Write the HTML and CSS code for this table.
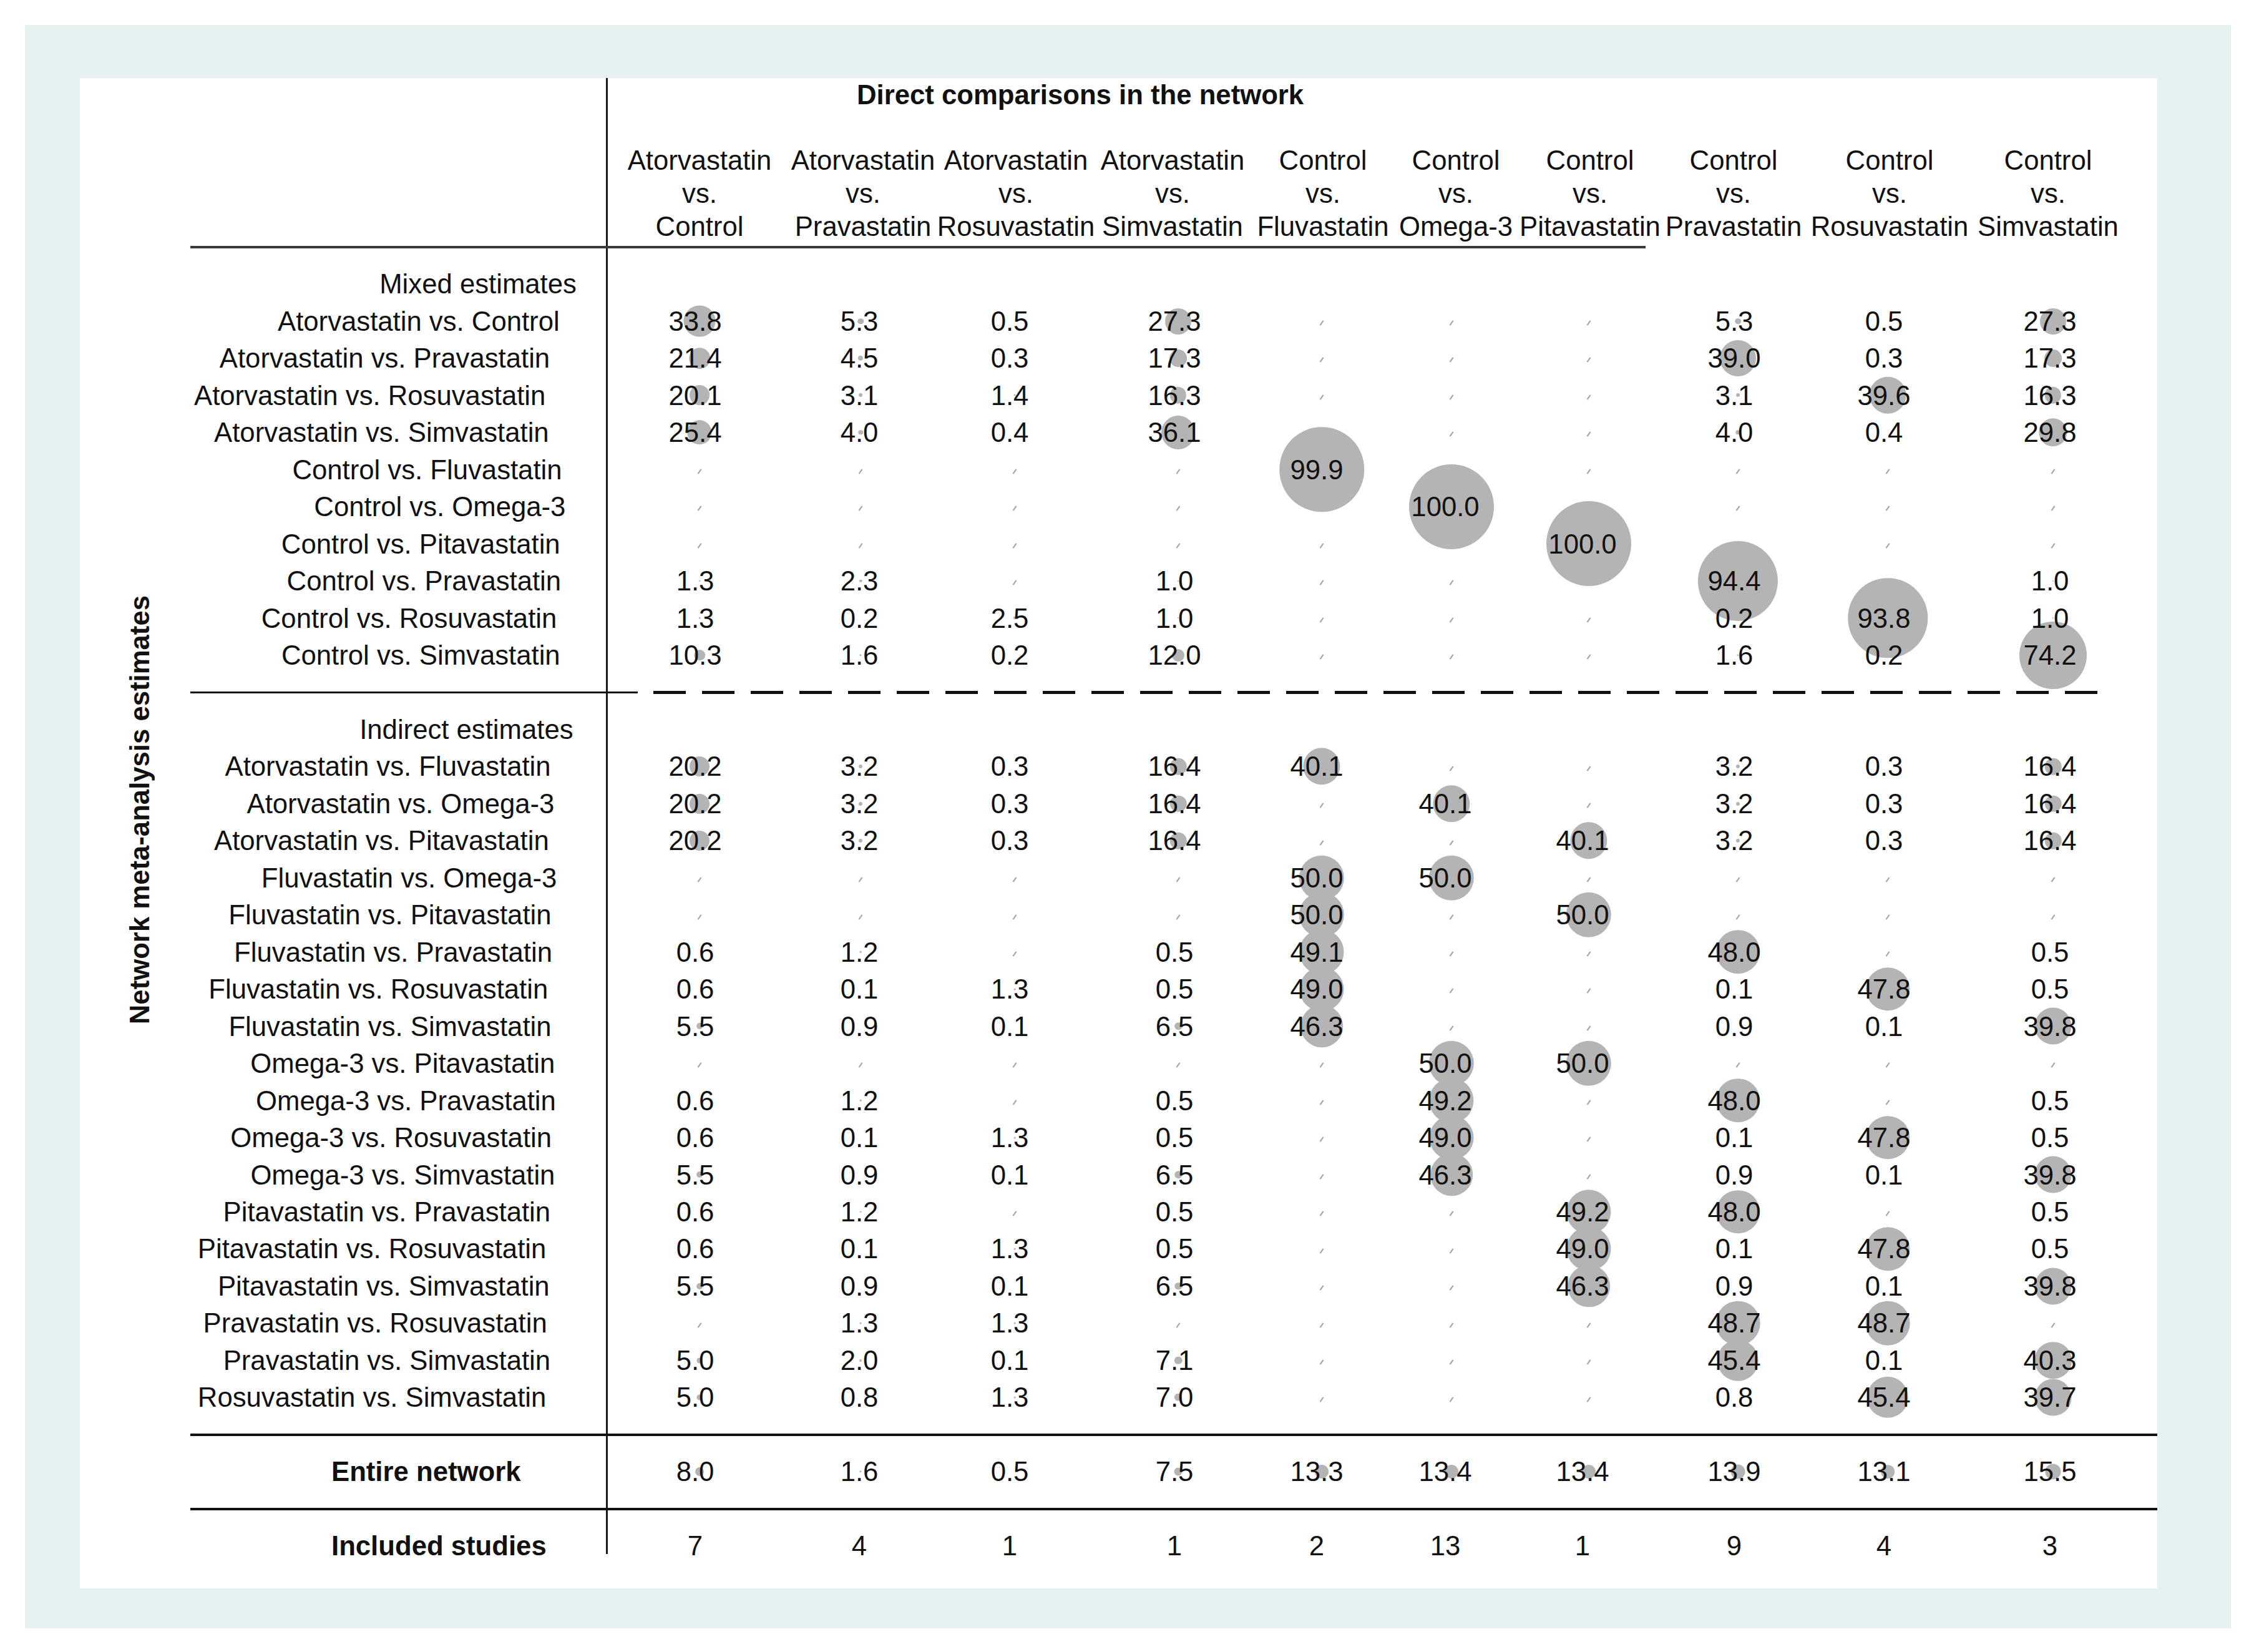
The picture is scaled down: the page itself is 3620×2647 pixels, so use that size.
FILE: index.html
```html
<!DOCTYPE html>
<html lang="en">
<head>
<meta charset="utf-8">
<title>Direct comparisons in the network</title>
<link rel="stylesheet" href="styles.css">
</head>
<body>
<div class="frame">
  <div class="panel">
    <div class="yaxis"><span class="ytitle">Network meta-analysis estimates</span></div>
    <div class="table">
      <div class="row row-title"><div class="lab"></div><div class="title">Direct comparisons in the network</div></div>
      <div class="row row-head">
        <div class="lab"></div>
        <div class="h"><span>Atorvastatin</span><span>vs.</span><span>Control</span></div>
        <div class="h"><span>Atorvastatin</span><span>vs.</span><span>Pravastatin</span></div>
        <div class="h"><span>Atorvastatin</span><span>vs.</span><span>Rosuvastatin</span></div>
        <div class="h"><span>Atorvastatin</span><span>vs.</span><span>Simvastatin</span></div>
        <div class="h"><span>Control</span><span>vs.</span><span>Fluvastatin</span></div>
        <div class="h"><span>Control</span><span>vs.</span><span>Omega-3</span></div>
        <div class="h"><span>Control</span><span>vs.</span><span>Pitavastatin</span></div>
        <div class="h"><span>Control</span><span>vs.</span><span>Pravastatin</span></div>
        <div class="h"><span>Control</span><span>vs.</span><span>Rosuvastatin</span></div>
        <div class="h"><span>Control</span><span>vs.</span><span>Simvastatin</span></div>
      </div>
      <div class="row row-hrule"><div class="lab"></div><div class="rule rule-head"></div></div>

      <div class="row"><div class="lab"><span class="t">Mixed estimates</span></div></div>
      <div class="row">
        <div class="lab"><span class="t">Atorvastatin vs. Control</span></div>
        <div class="c"><i class="b" style="--d:50.9px"></i><span class="v">33.8</span></div>
        <div class="c"><i class="b" style="--d:9.6px"></i><span class="v">5.3</span></div>
        <div class="c"><span class="v">0.5</span></div>
        <div class="c"><i class="b" style="--d:42px"></i><span class="v">27.3</span></div>
        <div class="c"><i class="na"></i></div>
        <div class="c"><i class="na"></i></div>
        <div class="c"><i class="na"></i></div>
        <div class="c"><i class="b" style="--d:9.6px"></i><span class="v">5.3</span></div>
        <div class="c"><span class="v">0.5</span></div>
        <div class="c"><i class="b" style="--d:42px"></i><span class="v">27.3</span></div>
      </div>
      <div class="row">
        <div class="lab"><span class="t">Atorvastatin vs. Pravastatin</span></div>
        <div class="c"><i class="b" style="--d:33.7px"></i><span class="v">21.4</span></div>
        <div class="c"><i class="b" style="--d:8.3px"></i><span class="v">4.5</span></div>
        <div class="c"><span class="v">0.3</span></div>
        <div class="c"><i class="b" style="--d:27.8px"></i><span class="v">17.3</span></div>
        <div class="c"><i class="na"></i></div>
        <div class="c"><i class="na"></i></div>
        <div class="c"><i class="na"></i></div>
        <div class="c"><i class="b" style="--d:57.9px"></i><span class="v">39.0</span></div>
        <div class="c"><span class="v">0.3</span></div>
        <div class="c"><i class="b" style="--d:27.8px"></i><span class="v">17.3</span></div>
      </div>
      <div class="row">
        <div class="lab"><span class="t">Atorvastatin vs. Rosuvastatin</span></div>
        <div class="c"><i class="b" style="--d:31.9px"></i><span class="v">20.1</span></div>
        <div class="c"><i class="b" style="--d:5.9px"></i><span class="v">3.1</span></div>
        <div class="c"><i class="b" style="--d:2.9px"></i><span class="v">1.4</span></div>
        <div class="c"><i class="b" style="--d:26.4px"></i><span class="v">16.3</span></div>
        <div class="c"><i class="na"></i></div>
        <div class="c"><i class="na"></i></div>
        <div class="c"><i class="na"></i></div>
        <div class="c"><i class="b" style="--d:5.9px"></i><span class="v">3.1</span></div>
        <div class="c"><i class="b" style="--d:58.7px"></i><span class="v">39.6</span></div>
        <div class="c"><i class="b" style="--d:26.4px"></i><span class="v">16.3</span></div>
      </div>
      <div class="row">
        <div class="lab"><span class="t">Atorvastatin vs. Simvastatin</span></div>
        <div class="c"><i class="b" style="--d:39.3px"></i><span class="v">25.4</span></div>
        <div class="c"><i class="b" style="--d:7.5px"></i><span class="v">4.0</span></div>
        <div class="c"><span class="v">0.4</span></div>
        <div class="c"><i class="b" style="--d:54px"></i><span class="v">36.1</span></div>
        <div class="c"><i class="na"></i></div>
        <div class="c"><i class="na"></i></div>
        <div class="c"><i class="na"></i></div>
        <div class="c"><i class="b" style="--d:7.5px"></i><span class="v">4.0</span></div>
        <div class="c"><span class="v">0.4</span></div>
        <div class="c"><i class="b" style="--d:45.4px"></i><span class="v">29.8</span></div>
      </div>
      <div class="row">
        <div class="lab"><span class="t">Control vs. Fluvastatin</span></div>
        <div class="c"><i class="na"></i></div>
        <div class="c"><i class="na"></i></div>
        <div class="c"><i class="na"></i></div>
        <div class="c"><i class="na"></i></div>
        <div class="c"><i class="b" style="--d:135.5px"></i><span class="v">99.9</span></div>
        <div class="c"><i class="na"></i></div>
        <div class="c"><i class="na"></i></div>
        <div class="c"><i class="na"></i></div>
        <div class="c"><i class="na"></i></div>
        <div class="c"><i class="na"></i></div>
      </div>
      <div class="row">
        <div class="lab"><span class="t">Control vs. Omega-3</span></div>
        <div class="c"><i class="na"></i></div>
        <div class="c"><i class="na"></i></div>
        <div class="c"><i class="na"></i></div>
        <div class="c"><i class="na"></i></div>
        <div class="c"><i class="na"></i></div>
        <div class="c"><i class="b" style="--d:136px"></i><span class="v">100.0</span></div>
        <div class="c"><i class="na"></i></div>
        <div class="c"><i class="na"></i></div>
        <div class="c"><i class="na"></i></div>
        <div class="c"><i class="na"></i></div>
      </div>
      <div class="row">
        <div class="lab"><span class="t">Control vs. Pitavastatin</span></div>
        <div class="c"><i class="na"></i></div>
        <div class="c"><i class="na"></i></div>
        <div class="c"><i class="na"></i></div>
        <div class="c"><i class="na"></i></div>
        <div class="c"><i class="na"></i></div>
        <div class="c"><i class="na"></i></div>
        <div class="c"><i class="b" style="--d:136px"></i><span class="v">100.0</span></div>
        <div class="c"><i class="na"></i></div>
        <div class="c"><i class="na"></i></div>
        <div class="c"><i class="na"></i></div>
      </div>
      <div class="row">
        <div class="lab"><span class="t">Control vs. Pravastatin</span></div>
        <div class="c"><i class="b" style="--d:2.7px"></i><span class="v">1.3</span></div>
        <div class="c"><i class="b" style="--d:4.5px"></i><span class="v">2.3</span></div>
        <div class="c"><i class="na"></i></div>
        <div class="c"><i class="b" style="--d:2.1px"></i><span class="v">1.0</span></div>
        <div class="c"><i class="na"></i></div>
        <div class="c"><i class="na"></i></div>
        <div class="c"><i class="na"></i></div>
        <div class="c"><i class="b" style="--d:128.2px"></i><span class="v">94.4</span></div>
        <div class="c"><i class="na"></i></div>
        <div class="c"><i class="b" style="--d:2.1px"></i><span class="v">1.0</span></div>
      </div>
      <div class="row">
        <div class="lab"><span class="t">Control vs. Rosuvastatin</span></div>
        <div class="c"><i class="b" style="--d:2.7px"></i><span class="v">1.3</span></div>
        <div class="c"><span class="v">0.2</span></div>
        <div class="c"><i class="b" style="--d:4.9px"></i><span class="v">2.5</span></div>
        <div class="c"><i class="b" style="--d:2.1px"></i><span class="v">1.0</span></div>
        <div class="c"><i class="na"></i></div>
        <div class="c"><i class="na"></i></div>
        <div class="c"><i class="na"></i></div>
        <div class="c"><span class="v">0.2</span></div>
        <div class="c"><i class="b" style="--d:127.5px"></i><span class="v">93.8</span></div>
        <div class="c"><i class="b" style="--d:2.1px"></i><span class="v">1.0</span></div>
      </div>
      <div class="row">
        <div class="lab"><span class="t">Control vs. Simvastatin</span></div>
        <div class="c"><i class="b" style="--d:17.5px"></i><span class="v">10.3</span></div>
        <div class="c"><i class="b" style="--d:3.3px"></i><span class="v">1.6</span></div>
        <div class="c"><span class="v">0.2</span></div>
        <div class="c"><i class="b" style="--d:20px"></i><span class="v">12.0</span></div>
        <div class="c"><i class="na"></i></div>
        <div class="c"><i class="na"></i></div>
        <div class="c"><i class="na"></i></div>
        <div class="c"><i class="b" style="--d:3.3px"></i><span class="v">1.6</span></div>
        <div class="c"><span class="v">0.2</span></div>
        <div class="c"><i class="b" style="--d:108px"></i><span class="v">74.2</span></div>
      </div>

      <div class="row"><div class="lab"></div><div class="rule rule-dash"><span class="solid"></span><span class="dashes"></span></div></div>

      <div class="row"><div class="lab"><span class="t">Indirect estimates</span></div></div>
      <div class="row">
        <div class="lab"><span class="t">Atorvastatin vs. Fluvastatin</span></div>
        <div class="c"><i class="b" style="--d:32px"></i><span class="v">20.2</span></div>
        <div class="c"><i class="b" style="--d:6.1px"></i><span class="v">3.2</span></div>
        <div class="c"><span class="v">0.3</span></div>
        <div class="c"><i class="b" style="--d:26.5px"></i><span class="v">16.4</span></div>
        <div class="c"><i class="b" style="--d:59.3px"></i><span class="v">40.1</span></div>
        <div class="c"><i class="na"></i></div>
        <div class="c"><i class="na"></i></div>
        <div class="c"><i class="b" style="--d:6.1px"></i><span class="v">3.2</span></div>
        <div class="c"><span class="v">0.3</span></div>
        <div class="c"><i class="b" style="--d:26.5px"></i><span class="v">16.4</span></div>
      </div>
      <div class="row">
        <div class="lab"><span class="t">Atorvastatin vs. Omega-3</span></div>
        <div class="c"><i class="b" style="--d:32px"></i><span class="v">20.2</span></div>
        <div class="c"><i class="b" style="--d:6.1px"></i><span class="v">3.2</span></div>
        <div class="c"><span class="v">0.3</span></div>
        <div class="c"><i class="b" style="--d:26.5px"></i><span class="v">16.4</span></div>
        <div class="c"><i class="na"></i></div>
        <div class="c"><i class="b" style="--d:59.3px"></i><span class="v">40.1</span></div>
        <div class="c"><i class="na"></i></div>
        <div class="c"><i class="b" style="--d:6.1px"></i><span class="v">3.2</span></div>
        <div class="c"><span class="v">0.3</span></div>
        <div class="c"><i class="b" style="--d:26.5px"></i><span class="v">16.4</span></div>
      </div>
      <div class="row">
        <div class="lab"><span class="t">Atorvastatin vs. Pitavastatin</span></div>
        <div class="c"><i class="b" style="--d:32px"></i><span class="v">20.2</span></div>
        <div class="c"><i class="b" style="--d:6.1px"></i><span class="v">3.2</span></div>
        <div class="c"><span class="v">0.3</span></div>
        <div class="c"><i class="b" style="--d:26.5px"></i><span class="v">16.4</span></div>
        <div class="c"><i class="na"></i></div>
        <div class="c"><i class="na"></i></div>
        <div class="c"><i class="b" style="--d:59.3px"></i><span class="v">40.1</span></div>
        <div class="c"><i class="b" style="--d:6.1px"></i><span class="v">3.2</span></div>
        <div class="c"><span class="v">0.3</span></div>
        <div class="c"><i class="b" style="--d:26.5px"></i><span class="v">16.4</span></div>
      </div>
      <div class="row">
        <div class="lab"><span class="t">Fluvastatin vs. Omega-3</span></div>
        <div class="c"><i class="na"></i></div>
        <div class="c"><i class="na"></i></div>
        <div class="c"><i class="na"></i></div>
        <div class="c"><i class="na"></i></div>
        <div class="c"><i class="b" style="--d:72.4px"></i><span class="v">50.0</span></div>
        <div class="c"><i class="b" style="--d:72.4px"></i><span class="v">50.0</span></div>
        <div class="c"><i class="na"></i></div>
        <div class="c"><i class="na"></i></div>
        <div class="c"><i class="na"></i></div>
        <div class="c"><i class="na"></i></div>
      </div>
      <div class="row">
        <div class="lab"><span class="t">Fluvastatin vs. Pitavastatin</span></div>
        <div class="c"><i class="na"></i></div>
        <div class="c"><i class="na"></i></div>
        <div class="c"><i class="na"></i></div>
        <div class="c"><i class="na"></i></div>
        <div class="c"><i class="b" style="--d:72.4px"></i><span class="v">50.0</span></div>
        <div class="c"><i class="na"></i></div>
        <div class="c"><i class="b" style="--d:72.4px"></i><span class="v">50.0</span></div>
        <div class="c"><i class="na"></i></div>
        <div class="c"><i class="na"></i></div>
        <div class="c"><i class="na"></i></div>
      </div>
      <div class="row">
        <div class="lab"><span class="t">Fluvastatin vs. Pravastatin</span></div>
        <div class="c"><span class="v">0.6</span></div>
        <div class="c"><i class="b" style="--d:2.5px"></i><span class="v">1.2</span></div>
        <div class="c"><i class="na"></i></div>
        <div class="c"><span class="v">0.5</span></div>
        <div class="c"><i class="b" style="--d:71.2px"></i><span class="v">49.1</span></div>
        <div class="c"><i class="na"></i></div>
        <div class="c"><i class="na"></i></div>
        <div class="c"><i class="b" style="--d:69.7px"></i><span class="v">48.0</span></div>
        <div class="c"><i class="na"></i></div>
        <div class="c"><span class="v">0.5</span></div>
      </div>
      <div class="row">
        <div class="lab"><span class="t">Fluvastatin vs. Rosuvastatin</span></div>
        <div class="c"><span class="v">0.6</span></div>
        <div class="c"><span class="v">0.1</span></div>
        <div class="c"><i class="b" style="--d:2.7px"></i><span class="v">1.3</span></div>
        <div class="c"><span class="v">0.5</span></div>
        <div class="c"><i class="b" style="--d:71px"></i><span class="v">49.0</span></div>
        <div class="c"><i class="na"></i></div>
        <div class="c"><i class="na"></i></div>
        <div class="c"><span class="v">0.1</span></div>
        <div class="c"><i class="b" style="--d:69.5px"></i><span class="v">47.8</span></div>
        <div class="c"><span class="v">0.5</span></div>
      </div>
      <div class="row">
        <div class="lab"><span class="t">Fluvastatin vs. Simvastatin</span></div>
        <div class="c"><i class="b" style="--d:9.9px"></i><span class="v">5.5</span></div>
        <div class="c"><span class="v">0.9</span></div>
        <div class="c"><span class="v">0.1</span></div>
        <div class="c"><i class="b" style="--d:11.5px"></i><span class="v">6.5</span></div>
        <div class="c"><i class="b" style="--d:67.5px"></i><span class="v">46.3</span></div>
        <div class="c"><i class="na"></i></div>
        <div class="c"><i class="na"></i></div>
        <div class="c"><span class="v">0.9</span></div>
        <div class="c"><span class="v">0.1</span></div>
        <div class="c"><i class="b" style="--d:58.9px"></i><span class="v">39.8</span></div>
      </div>
      <div class="row">
        <div class="lab"><span class="t">Omega-3 vs. Pitavastatin</span></div>
        <div class="c"><i class="na"></i></div>
        <div class="c"><i class="na"></i></div>
        <div class="c"><i class="na"></i></div>
        <div class="c"><i class="na"></i></div>
        <div class="c"><i class="na"></i></div>
        <div class="c"><i class="b" style="--d:72.4px"></i><span class="v">50.0</span></div>
        <div class="c"><i class="b" style="--d:72.4px"></i><span class="v">50.0</span></div>
        <div class="c"><i class="na"></i></div>
        <div class="c"><i class="na"></i></div>
        <div class="c"><i class="na"></i></div>
      </div>
      <div class="row">
        <div class="lab"><span class="t">Omega-3 vs. Pravastatin</span></div>
        <div class="c"><span class="v">0.6</span></div>
        <div class="c"><i class="b" style="--d:2.5px"></i><span class="v">1.2</span></div>
        <div class="c"><i class="na"></i></div>
        <div class="c"><span class="v">0.5</span></div>
        <div class="c"><i class="na"></i></div>
        <div class="c"><i class="b" style="--d:71.3px"></i><span class="v">49.2</span></div>
        <div class="c"><i class="na"></i></div>
        <div class="c"><i class="b" style="--d:69.7px"></i><span class="v">48.0</span></div>
        <div class="c"><i class="na"></i></div>
        <div class="c"><span class="v">0.5</span></div>
      </div>
      <div class="row">
        <div class="lab"><span class="t">Omega-3 vs. Rosuvastatin</span></div>
        <div class="c"><span class="v">0.6</span></div>
        <div class="c"><span class="v">0.1</span></div>
        <div class="c"><i class="b" style="--d:2.7px"></i><span class="v">1.3</span></div>
        <div class="c"><span class="v">0.5</span></div>
        <div class="c"><i class="na"></i></div>
        <div class="c"><i class="b" style="--d:71px"></i><span class="v">49.0</span></div>
        <div class="c"><i class="na"></i></div>
        <div class="c"><span class="v">0.1</span></div>
        <div class="c"><i class="b" style="--d:69.5px"></i><span class="v">47.8</span></div>
        <div class="c"><span class="v">0.5</span></div>
      </div>
      <div class="row">
        <div class="lab"><span class="t">Omega-3 vs. Simvastatin</span></div>
        <div class="c"><i class="b" style="--d:9.9px"></i><span class="v">5.5</span></div>
        <div class="c"><span class="v">0.9</span></div>
        <div class="c"><span class="v">0.1</span></div>
        <div class="c"><i class="b" style="--d:11.5px"></i><span class="v">6.5</span></div>
        <div class="c"><i class="na"></i></div>
        <div class="c"><i class="b" style="--d:67.5px"></i><span class="v">46.3</span></div>
        <div class="c"><i class="na"></i></div>
        <div class="c"><span class="v">0.9</span></div>
        <div class="c"><span class="v">0.1</span></div>
        <div class="c"><i class="b" style="--d:58.9px"></i><span class="v">39.8</span></div>
      </div>
      <div class="row">
        <div class="lab"><span class="t">Pitavastatin vs. Pravastatin</span></div>
        <div class="c"><span class="v">0.6</span></div>
        <div class="c"><i class="b" style="--d:2.5px"></i><span class="v">1.2</span></div>
        <div class="c"><i class="na"></i></div>
        <div class="c"><span class="v">0.5</span></div>
        <div class="c"><i class="na"></i></div>
        <div class="c"><i class="na"></i></div>
        <div class="c"><i class="b" style="--d:71.3px"></i><span class="v">49.2</span></div>
        <div class="c"><i class="b" style="--d:69.7px"></i><span class="v">48.0</span></div>
        <div class="c"><i class="na"></i></div>
        <div class="c"><span class="v">0.5</span></div>
      </div>
      <div class="row">
        <div class="lab"><span class="t">Pitavastatin vs. Rosuvastatin</span></div>
        <div class="c"><span class="v">0.6</span></div>
        <div class="c"><span class="v">0.1</span></div>
        <div class="c"><i class="b" style="--d:2.7px"></i><span class="v">1.3</span></div>
        <div class="c"><span class="v">0.5</span></div>
        <div class="c"><i class="na"></i></div>
        <div class="c"><i class="na"></i></div>
        <div class="c"><i class="b" style="--d:71px"></i><span class="v">49.0</span></div>
        <div class="c"><span class="v">0.1</span></div>
        <div class="c"><i class="b" style="--d:69.5px"></i><span class="v">47.8</span></div>
        <div class="c"><span class="v">0.5</span></div>
      </div>
      <div class="row">
        <div class="lab"><span class="t">Pitavastatin vs. Simvastatin</span></div>
        <div class="c"><i class="b" style="--d:9.9px"></i><span class="v">5.5</span></div>
        <div class="c"><span class="v">0.9</span></div>
        <div class="c"><span class="v">0.1</span></div>
        <div class="c"><i class="b" style="--d:11.5px"></i><span class="v">6.5</span></div>
        <div class="c"><i class="na"></i></div>
        <div class="c"><i class="na"></i></div>
        <div class="c"><i class="b" style="--d:67.5px"></i><span class="v">46.3</span></div>
        <div class="c"><span class="v">0.9</span></div>
        <div class="c"><span class="v">0.1</span></div>
        <div class="c"><i class="b" style="--d:58.9px"></i><span class="v">39.8</span></div>
      </div>
      <div class="row">
        <div class="lab"><span class="t">Pravastatin vs. Rosuvastatin</span></div>
        <div class="c"><i class="na"></i></div>
        <div class="c"><i class="b" style="--d:2.7px"></i><span class="v">1.3</span></div>
        <div class="c"><i class="b" style="--d:2.7px"></i><span class="v">1.3</span></div>
        <div class="c"><i class="na"></i></div>
        <div class="c"><i class="na"></i></div>
        <div class="c"><i class="na"></i></div>
        <div class="c"><i class="na"></i></div>
        <div class="c"><i class="b" style="--d:70.7px"></i><span class="v">48.7</span></div>
        <div class="c"><i class="b" style="--d:70.7px"></i><span class="v">48.7</span></div>
        <div class="c"><i class="na"></i></div>
      </div>
      <div class="row">
        <div class="lab"><span class="t">Pravastatin vs. Simvastatin</span></div>
        <div class="c"><i class="b" style="--d:9.1px"></i><span class="v">5.0</span></div>
        <div class="c"><i class="b" style="--d:4px"></i><span class="v">2.0</span></div>
        <div class="c"><span class="v">0.1</span></div>
        <div class="c"><i class="b" style="--d:12.5px"></i><span class="v">7.1</span></div>
        <div class="c"><i class="na"></i></div>
        <div class="c"><i class="na"></i></div>
        <div class="c"><i class="na"></i></div>
        <div class="c"><i class="b" style="--d:66.3px"></i><span class="v">45.4</span></div>
        <div class="c"><span class="v">0.1</span></div>
        <div class="c"><i class="b" style="--d:59.6px"></i><span class="v">40.3</span></div>
      </div>
      <div class="row">
        <div class="lab"><span class="t">Rosuvastatin vs. Simvastatin</span></div>
        <div class="c"><i class="b" style="--d:9.1px"></i><span class="v">5.0</span></div>
        <div class="c"><span class="v">0.8</span></div>
        <div class="c"><i class="b" style="--d:2.7px"></i><span class="v">1.3</span></div>
        <div class="c"><i class="b" style="--d:12.3px"></i><span class="v">7.0</span></div>
        <div class="c"><i class="na"></i></div>
        <div class="c"><i class="na"></i></div>
        <div class="c"><i class="na"></i></div>
        <div class="c"><span class="v">0.8</span></div>
        <div class="c"><i class="b" style="--d:66.3px"></i><span class="v">45.4</span></div>
        <div class="c"><i class="b" style="--d:58.8px"></i><span class="v">39.7</span></div>
      </div>

      <div class="row"><div class="lab"></div><div class="rule"></div></div>

      <div class="row">
        <div class="lab lab-b">Entire network</div>
        <div class="c"><i class="b" style="--d:13.9px"></i><span class="v">8.0</span></div>
        <div class="c"><i class="b" style="--d:3.3px"></i><span class="v">1.6</span></div>
        <div class="c"><span class="v">0.5</span></div>
        <div class="c"><i class="b" style="--d:13.1px"></i><span class="v">7.5</span></div>
        <div class="c"><i class="b" style="--d:22px"></i><span class="v">13.3</span></div>
        <div class="c"><i class="b" style="--d:22.1px"></i><span class="v">13.4</span></div>
        <div class="c"><i class="b" style="--d:22.1px"></i><span class="v">13.4</span></div>
        <div class="c"><i class="b" style="--d:22.9px"></i><span class="v">13.9</span></div>
        <div class="c"><i class="b" style="--d:21.7px"></i><span class="v">13.1</span></div>
        <div class="c"><i class="b" style="--d:25.2px"></i><span class="v">15.5</span></div>
      </div>

      <div class="row"><div class="lab"></div><div class="rule"></div></div>

      <div class="row">
        <div class="lab lab-b lab-last">Included studies</div>
        <div class="c"><span class="v">7</span></div>
        <div class="c"><span class="v">4</span></div>
        <div class="c"><span class="v">1</span></div>
        <div class="c"><span class="v">1</span></div>
        <div class="c"><span class="v">2</span></div>
        <div class="c"><span class="v">13</span></div>
        <div class="c"><span class="v">1</span></div>
        <div class="c"><span class="v">9</span></div>
        <div class="c"><span class="v">4</span></div>
        <div class="c"><span class="v">3</span></div>
      </div>
    </div>
  </div>
</div>
</body>
</html>
```

FILE: styles.css
```css
* { box-sizing: border-box; }

html, body {
  margin: 0;
  padding: 0;
  background: #ffffff;
}

body {
  font-family: "Liberation Sans", Arial, Helvetica, sans-serif;
  font-size: 43.7px;
  color: #111111;
}

.frame {
  margin: 40px 0 0 40px;
  width: 3535px;
  height: 2569px;
  background: #e6f1f2;
  padding: 85px 118px 64px 88px;
}

.panel {
  width: 3329px;
  height: 2420px;
  background: #ffffff;
  display: flex;
}

.yaxis {
  width: 177px;
  flex: none;
  padding-left: 71px;
  padding-top: 829px;
}

.ytitle {
  display: block;
  writing-mode: vertical-rl;
  transform: rotate(180deg);
  font-weight: bold;
  line-height: 50px;
  white-space: nowrap;
}

.table {
  width: 3152px;
  flex: none;
}

.row {
  display: grid;
  grid-template-columns: 684px 262px 253px 248px 246px 227px 214px 223px 240px 252px 254px 49px;
  height: 59.47px;
  line-height: 59.47px;
}

/* per-column nudges: header centre (hx), bubble centre (bx), value text centre (tx) */
.row > :nth-child(2)  { --hx: 1px;    --bx: 1px;    --tx: -6px; }
.row > :nth-child(3)  { --hx: 5.5px;  --bx: 1.5px;  --tx: -0.5px; }
.row > :nth-child(4)  { --hx: 0px;    --bx: -2px;   --tx: -10px; }
.row > :nth-child(5)  { --hx: 4px;    --bx: 13px;   --tx: 7px; }
.row > :nth-child(6)  { --hx: 8.5px;  --bx: 6.5px;  --tx: -1.5px; }
.row > :nth-child(7)  { --hx: 1px;    --bx: -6px;   --tx: -16px; }
.row > :nth-child(8)  { --hx: -2.5px; --bx: -4.5px; --tx: -14.5px; }
.row > :nth-child(9)  { --hx: -4px;   --bx: 3px;    --tx: -3px; }
.row > :nth-child(10) { --hx: 0px;    --bx: -3px;   --tx: -9px; }
.row > :nth-child(11) { --hx: 1px;    --bx: 9px;    --tx: 4px; }

.lab {
  grid-row: 1;
  grid-column: 1;
  background: linear-gradient(#1a1a1a, #1a1a1a) right 15px top / 3px 100% no-repeat;
  text-align: right;
  padding-right: 2px;
  white-space: nowrap;
}

.lab .t {
  display: inline-block;
  transform: translateX(-20%);
}

.lab-b {
  font-weight: bold;
  text-align: left;
  padding-left: 226px;
  padding-right: 0;
}

.lab-last { background-size: 3px 43px; }

.row-title {
  height: 105px;
  line-height: 54px;
}

.title {
  grid-column: 2 / 12;
  font-weight: bold;
  padding-left: 384px;
  white-space: nowrap;
}

.row-head {
  height: 159px;
  line-height: 53px;
}

.h {
  display: flex;
  flex-direction: column;
  align-items: center;
  margin-left: calc(2 * var(--hx, 0px));
}

.h span { white-space: nowrap; }

.row-hrule { height: 36.3px; }

.rule {
  grid-row: 1;
  grid-column: 1 / -1;
  align-self: center;
  height: 4px;
  background: #111111;
}

.rule-head {
  align-self: start;
  margin-top: 5px;
  width: 2332px;
  background: #3a3a3a;
}

.rule-dash {
  display: flex;
  align-items: center;
  height: 5px;
  background: none;
}

.rule-dash .solid {
  width: 717px;
  height: 3px;
  background: #111111;
}

.rule-dash .dashes {
  margin-left: 25px;
  width: 2321px;
  height: 5px;
  background: repeating-linear-gradient(90deg, #111111 0 52px, transparent 52px 78px);
}

.c {
  position: relative;
  display: flex;
  align-items: center;
  justify-content: center;
}

.v {
  position: relative;
  z-index: 2;
  margin-left: calc(2 * var(--tx, 0px));
  white-space: nowrap;
}

.b {
  position: absolute;
  left: calc(50% + var(--bx, 0px));
  top: 50%;
  width: var(--d);
  height: var(--d);
  transform: translate(-50%, -50%);
  border-radius: 50%;
  background: #b4b4b4;
  z-index: 1;
}

.na {
  display: block;
  width: 2px;
  height: 9px;
  margin-left: calc(2 * var(--bx, 0px));
  background: #a3a3a3;
  transform: translateY(3px) rotate(35deg);
}
```
